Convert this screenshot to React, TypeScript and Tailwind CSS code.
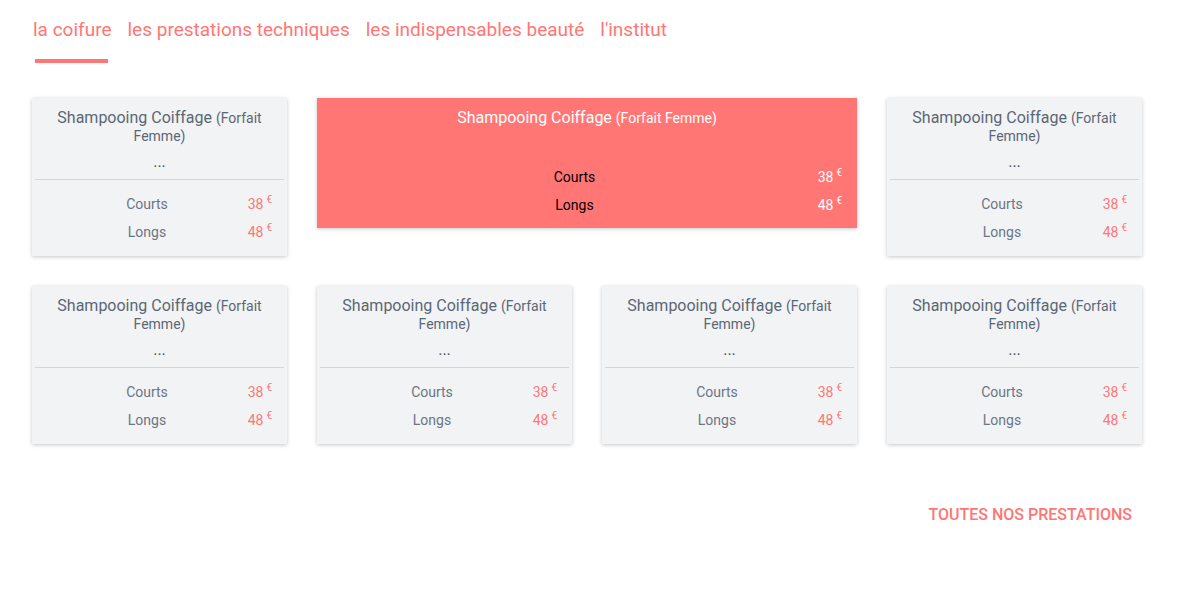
import React from "react";

const PINK = "text-[#ff7675]";

function PriceRows({ hl }: { hl?: boolean }) {
  const rows = [
    ["Courts", "38"],
    ["Longs", "48"],
  ];
  return (
    <div>
      {rows.map(([label, price]) => (
        <div key={label} className="flex items-center h-[28px] pr-[15px] text-[14px] leading-[20px]">
          <div className={`flex-1 text-center pl-[24px] ${hl ? "text-black" : "text-[#6b7685]"}`}>{label}</div>
          <div className={`w-[34px] text-right whitespace-nowrap ${hl ? "text-white" : PINK}`}>
            {price}
            <span className="inline-block text-[10px] leading-[10px] ml-[3px] relative -top-[6px]">€</span>
          </div>
        </div>
      ))}
    </div>
  );
}

function Card() {
  return (
    <div className="bg-[#f2f3f5] shadow-[0_1px_4px_rgba(0,0,0,0.22)] pt-[11px] h-[158px]">
      <div className="px-[15px] text-center leading-[18px] text-[#5b6776]">
        <span className="text-[16px]">Shampooing Coiffage</span>{" "}
        <span className="text-[14px]">(Forfait Femme)</span>
      </div>
      <div className="text-center text-[16px] leading-[24px] mt-[5px] text-[#4b5563]">...</div>
      <div className="mx-[3px] mt-[5px] h-px bg-[#d3d5d9]" />
      <div className="mt-[10px]">
        <PriceRows />
      </div>
    </div>
  );
}

function HighlightCard() {
  return (
    <div className="col-span-2 self-start bg-[#ff7675] shadow-[0_1px_4px_rgba(0,0,0,0.22)] pt-[11px] pb-[9px]">
      <div className="px-[15px] text-center leading-[18px] text-white">
        <span className="text-[16px]">Shampooing Coiffage</span>{" "}
        <span className="text-[14px]">(Forfait Femme)</span>
      </div>
      <div className="mt-[36px]">
        <PriceRows hl />
      </div>
    </div>
  );
}

export default function App() {
  const tabs = ["la coifure", "les prestations techniques", "les indispensables beauté", "l'institut"];
  return (
    <div className="w-[1193px] h-[602px] bg-white font-['Roboto',sans-serif]">
      <div className="ml-[32px] w-[1110px] pt-[18px]">
        <div className="flex gap-[16px] text-[19px] leading-[24px] text-[#ff7675] pl-[1px]">
          {tabs.map((t) => (
            <span key={t}>{t}</span>
          ))}
        </div>
        <div className="ml-[3px] mt-[17px] w-[73px] h-[4px] bg-[#ff7675]" />
        <div className="mt-[35px] grid grid-cols-4 gap-x-[30px] gap-y-[30px] items-start">
          <Card />
          <HighlightCard />
          <Card />
          <Card />
          <Card />
          <Card />
          <Card />
        </div>
        <div className="flex justify-end mt-[59px] pr-[10px]">
          <span className="text-[16px] font-medium leading-[24px] text-[#ff7675] uppercase">Toutes nos prestations</span>
        </div>
      </div>
    </div>
  );
}
